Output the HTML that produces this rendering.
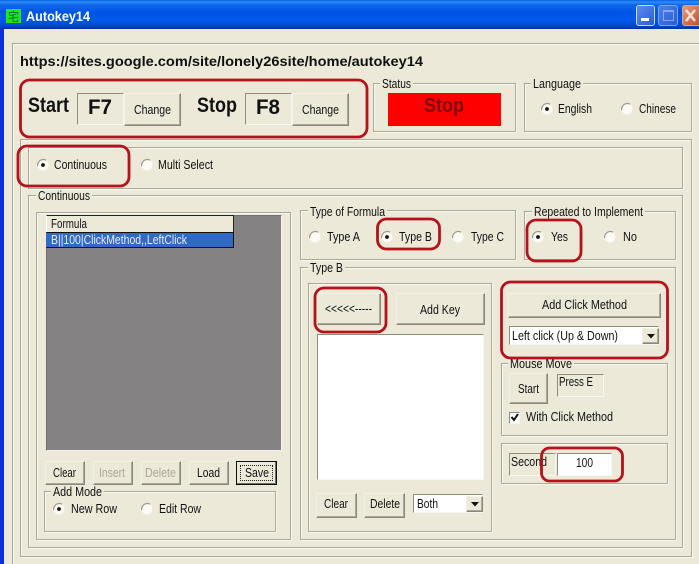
<!DOCTYPE html>
<html><head><meta charset="utf-8"><style>
html,body{margin:0;padding:0;overflow:hidden;width:699px;height:564px}
#w{position:relative;width:699px;height:564px;overflow:hidden;background:#ece9d8;filter:blur(.3px)}
#w div{position:absolute;box-sizing:border-box}
.g{border:1px solid #aca899;box-shadow:1px 1px 0 #f8f7f0,inset 1px 1px 0 #f8f7f0}
.b{background:#ece9d8;border:1px solid;border-color:#f4f2e8 #8a887a #8a887a #f4f2e8;box-shadow:inset -1px -1px 0 #aca899}
.s{border:1px solid;border-color:#8f8d7e #f8f7f0 #f8f7f0 #8f8d7e}
svg{position:absolute;left:0;top:0}
text{font-family:"Liberation Sans","Noto Sans CJK SC",sans-serif;font-size:13px;fill:#111}
.t{font-weight:bold}
</style></head><body><div id="w">
<div style="left:0;top:0;width:699px;height:29px;background:linear-gradient(#0a5fe0 0,#2a8cf5 2px,#0f66ea 5px,#0054e3 12px,#0058ee 20px,#0048c8 26px,#00309a 29px)"></div>
<div style="left:0;top:29px;width:4px;height:535px;background:#0831d9"></div>
<div style="left:6px;top:9px;width:15px;height:14px;background:#1fe51f"></div>

<div style="left:636px;top:5px;width:19px;height:21px;background:linear-gradient(135deg,#5d8cf0,#2a5ad8);border:1px solid #c8d8f8;border-radius:3px"></div>
<div style="left:641px;top:18px;width:8px;height:3px;background:#fff"></div>
<div style="left:658px;top:5px;width:20px;height:21px;background:linear-gradient(135deg,#4c80ec,#2a5ad8);border:1px solid #7ea4ee;border-radius:3px"></div>
<div style="left:663px;top:10px;width:11px;height:11px;border:1px solid #85a8ee;border-top-width:2px"></div>
<div style="left:682px;top:5px;width:17px;height:21px;background:linear-gradient(135deg,#e89a7c,#c8502c);border:1px solid #c8a898;border-right:0;border-radius:3px 0 0 3px"></div>

<div style="left:12px;top:43px;width:687px;height:521px;border-top:1px solid #aca899;border-left:1px solid #aca899;box-shadow:inset 1px 1px 0 #f8f7f0"></div>
<div class="g" style="left:20px;top:139px;width:672px;height:418px"></div>
<div class="g" style="left:28px;top:147px;width:655px;height:42px"></div>
<div class="g" style="left:28px;top:195px;width:655px;height:353px"></div>
<div class="g" style="left:36px;top:212px;width:255px;height:328px"></div>
<div class="g" style="left:300px;top:210px;width:216px;height:50px"></div>
<div class="g" style="left:524px;top:211px;width:152px;height:49px"></div>
<div class="g" style="left:300px;top:267px;width:376px;height:273px"></div>
<div class="g" style="left:308px;top:283px;width:184px;height:249px"></div>
<div class="g" style="left:373px;top:83px;width:143px;height:49px"></div>
<div class="g" style="left:524px;top:83px;width:168px;height:49px"></div>
<div class="g" style="left:44px;top:491px;width:232px;height:41px"></div>
<div class="g" style="left:501px;top:363px;width:167px;height:73px"></div>
<div class="g" style="left:501px;top:443px;width:167px;height:41px"></div>

<div class="s" style="left:77px;top:93px;width:47px;height:32px"></div>
<div class="b" style="left:124px;top:93px;width:57px;height:33px"></div>
<div class="s" style="left:245px;top:93px;width:47px;height:32px"></div>
<div class="b" style="left:292px;top:93px;width:57px;height:33px"></div>
<div style="left:388px;top:93px;width:113px;height:33px;background:#fe0000"></div>

<div style="left:46px;top:215px;width:236px;height:236px;background:#858284;border:1px solid;border-color:#6f6d70 #f6f4ec #f6f4ec #6f6d70"></div>
<div style="left:46px;top:215px;width:188px;height:18px;background:#ece9d8;border:1px solid #222;border-left-color:#fff"></div>
<div style="left:46px;top:232px;width:188px;height:16px;background:#316ac5;border:1px solid #111;border-left-color:#316ac5"></div>

<div class="b" style="left:45px;top:461px;width:40px;height:24px"></div>
<div class="b" style="left:93px;top:461px;width:40px;height:24px"></div>
<div class="b" style="left:141px;top:461px;width:40px;height:24px"></div>
<div class="b" style="left:189px;top:461px;width:40px;height:24px"></div>
<div class="b" style="left:236px;top:461px;width:41px;height:24px;border:1px solid #111;box-shadow:inset -1px -1px 0 #716f64"></div>
<div style="left:240px;top:465px;width:33px;height:16px;border:1px dotted #222"></div>

<div class="b" style="left:317px;top:293px;width:64px;height:32px"></div>
<div class="b" style="left:396px;top:293px;width:89px;height:32px"></div>
<div class="s" style="left:317px;top:334px;width:167px;height:146px;background:#fff"></div>
<div class="b" style="left:316px;top:493px;width:41px;height:25px"></div>
<div class="b" style="left:364px;top:493px;width:41px;height:25px"></div>
<div class="s" style="left:413px;top:494px;width:70px;height:19px;background:#fff"></div>
<div class="b" style="left:466px;top:496px;width:17px;height:16px"></div>

<div class="b" style="left:508px;top:293px;width:153px;height:25px"></div>
<div class="s" style="left:509px;top:326px;width:150px;height:19px;background:#fff"></div>
<div class="b" style="left:642px;top:328px;width:17px;height:16px"></div>
<div class="b" style="left:509px;top:373px;width:39px;height:31px"></div>
<div class="s" style="left:557px;top:374px;width:47px;height:23px"></div>
<div class="s" style="left:509px;top:412px;width:11px;height:12px;background:#fff"></div>
<div class="s" style="left:509px;top:453px;width:47px;height:23px"></div>
<div class="s" style="left:557px;top:453px;width:55px;height:23px;background:#fff"></div>

<svg width="699" height="564" viewBox="0 0 699 564">
<defs>
<g id="r"><circle r="5.5" fill="#fbfaf4"/><path d="M-4-3.500A5.500 5.500 0 0 1 3-4.800M-5.300 1A5.500 5.500 0 0 1-4-3.500" fill="none" stroke="#9a9888" stroke-width="1.200"/></g>
<g id="d"><use href="#r"/><circle r="1.900" fill="#111"/></g>
</defs>
<g fill="#ece9d8">
<rect x="380" y="80" width="33" height="8"/><rect x="531" y="80" width="52" height="8"/>
<rect x="36" y="192" width="56" height="8"/><rect x="308" y="207" width="79" height="8"/>
<rect x="532" y="208" width="113" height="8"/><rect x="308" y="264" width="37" height="8"/>
<rect x="51" y="488" width="53" height="8"/><rect x="508" y="360" width="66" height="8"/>
</g>
<text x="26" y="21" class="t" style="font-size:14px;fill:#fff" textLength="64" lengthAdjust="spacingAndGlyphs">Autokey14</text>
<text x="8" y="21" style="font-size:12px;fill:#063" textLength="11" lengthAdjust="spacingAndGlyphs">宅</text>
<text x="20" y="66" class="t" style="font-size:14px" textLength="403" lengthAdjust="spacingAndGlyphs">https://sites.google.com/site/lonely26site/home/autokey14</text>
<text x="28" y="112" class="t" style="font-size:21px" textLength="41" lengthAdjust="spacingAndGlyphs">Start</text>
<text x="88" y="114" class="t" style="font-size:21px" textLength="24" lengthAdjust="spacingAndGlyphs">F7</text>
<text x="197" y="112" class="t" style="font-size:21px" textLength="40" lengthAdjust="spacingAndGlyphs">Stop</text>
<text x="256" y="114" class="t" style="font-size:21px" textLength="24" lengthAdjust="spacingAndGlyphs">F8</text>
<text x="134" y="114" textLength="37" lengthAdjust="spacingAndGlyphs">Change</text>
<text x="302" y="114" textLength="37" lengthAdjust="spacingAndGlyphs">Change</text>
<text x="382" y="88" textLength="29" lengthAdjust="spacingAndGlyphs">Status</text>
<text x="424" y="112" class="t" style="font-size:20px;fill:#7c0a10" textLength="40" lengthAdjust="spacingAndGlyphs">Stop</text>
<text x="533" y="88" textLength="48" lengthAdjust="spacingAndGlyphs">Language</text>
<use href="#d" x="547" y="109"/><text x="558" y="113" textLength="34" lengthAdjust="spacingAndGlyphs">English</text>
<use href="#r" x="627" y="109"/><text x="639" y="113" textLength="37" lengthAdjust="spacingAndGlyphs">Chinese</text>
<use href="#d" x="43" y="165"/><text x="54" y="169" textLength="53" lengthAdjust="spacingAndGlyphs">Continuous</text>
<use href="#r" x="147" y="165"/><text x="158" y="169" textLength="55" lengthAdjust="spacingAndGlyphs">Multi Select</text>
<text x="38" y="200" textLength="52" lengthAdjust="spacingAndGlyphs">Continuous</text>
<text x="51" y="228" textLength="36" lengthAdjust="spacingAndGlyphs">Formula</text>
<text x="51" y="244" style="fill:#e8eef8" textLength="136" lengthAdjust="spacingAndGlyphs">B||100|ClickMethod,,LeftClick</text>
<text x="53" y="477" textLength="23" lengthAdjust="spacingAndGlyphs">Clear</text>
<text x="99" y="477" style="fill:#aca899" textLength="26" lengthAdjust="spacingAndGlyphs">Insert</text>
<text x="145" y="477" style="fill:#aca899" textLength="31" lengthAdjust="spacingAndGlyphs">Delete</text>
<text x="197" y="477" textLength="23" lengthAdjust="spacingAndGlyphs">Load</text>
<text x="245" y="477" textLength="24" lengthAdjust="spacingAndGlyphs">Save</text>
<text x="53" y="496" textLength="49" lengthAdjust="spacingAndGlyphs">Add Mode</text>
<use href="#d" x="59" y="509"/><text x="71" y="513" textLength="46" lengthAdjust="spacingAndGlyphs">New Row</text>
<use href="#r" x="147" y="509"/><text x="159" y="513" textLength="42" lengthAdjust="spacingAndGlyphs">Edit Row</text>
<text x="310" y="216" textLength="75" lengthAdjust="spacingAndGlyphs">Type of Formula</text>
<use href="#r" x="315" y="237"/><text x="327" y="241" textLength="33" lengthAdjust="spacingAndGlyphs">Type A</text>
<use href="#d" x="387" y="237"/><text x="399" y="241" textLength="33" lengthAdjust="spacingAndGlyphs">Type B</text>
<use href="#r" x="458" y="237"/><text x="471" y="241" textLength="33" lengthAdjust="spacingAndGlyphs">Type C</text>
<text x="534" y="216" textLength="109" lengthAdjust="spacingAndGlyphs">Repeated to Implement</text>
<use href="#d" x="538" y="237"/><text x="551" y="241" textLength="17" lengthAdjust="spacingAndGlyphs">Yes</text>
<use href="#r" x="610" y="237"/><text x="623" y="241" textLength="14" lengthAdjust="spacingAndGlyphs">No</text>
<text x="310" y="272" textLength="33" lengthAdjust="spacingAndGlyphs">Type B</text>
<text x="325" y="313" textLength="47" lengthAdjust="spacingAndGlyphs">&lt;&lt;&lt;&lt;&lt;-----</text>
<text x="420" y="314" textLength="40" lengthAdjust="spacingAndGlyphs">Add Key</text>
<text x="324" y="508" textLength="24" lengthAdjust="spacingAndGlyphs">Clear</text>
<text x="370" y="508" textLength="30" lengthAdjust="spacingAndGlyphs">Delete</text>
<text x="417" y="508" textLength="21" lengthAdjust="spacingAndGlyphs">Both</text>
<path d="M471 502h8l-4 4.500z" fill="#111"/>
<text x="542" y="309" textLength="85" lengthAdjust="spacingAndGlyphs">Add Click Method</text>
<text x="512" y="340" textLength="106" lengthAdjust="spacingAndGlyphs">Left click (Up &amp; Down)</text>
<path d="M647 334h8l-4 4.500z" fill="#111"/>
<text x="510" y="368" textLength="62" lengthAdjust="spacingAndGlyphs">Mouse Move</text>
<text x="518" y="393" textLength="21" lengthAdjust="spacingAndGlyphs">Start</text>
<text x="559" y="386" textLength="34" lengthAdjust="spacingAndGlyphs">Press E</text>
<path d="M511.500 417l2.500 3 4-6" fill="none" stroke="#111" stroke-width="2"/>
<text x="526" y="421" textLength="87" lengthAdjust="spacingAndGlyphs">With Click Method</text>
<text x="511" y="466" textLength="36" lengthAdjust="spacingAndGlyphs">Second</text>
<text x="576" y="467" textLength="17" lengthAdjust="spacingAndGlyphs">100</text>
<g fill="none" stroke="#b5121b" stroke-width="2.800">
<rect x="20.500" y="80" width="346.500" height="57" rx="9"/>
<rect x="18" y="146" width="111" height="40" rx="9"/>
<rect x="377.500" y="219" width="62" height="30" rx="9"/>
<rect x="527" y="220" width="54" height="41" rx="9"/>
<rect x="315" y="288" width="71" height="44" rx="9"/>
<rect x="501.500" y="282" width="166" height="76" rx="9"/>
<rect x="541.500" y="448" width="81" height="33" rx="8"/>
</g>
<path d="M686 10l9 11M695 10l-9 11" stroke="#f4e4dc" stroke-width="2.500"/>
</svg>
</div></body></html>
